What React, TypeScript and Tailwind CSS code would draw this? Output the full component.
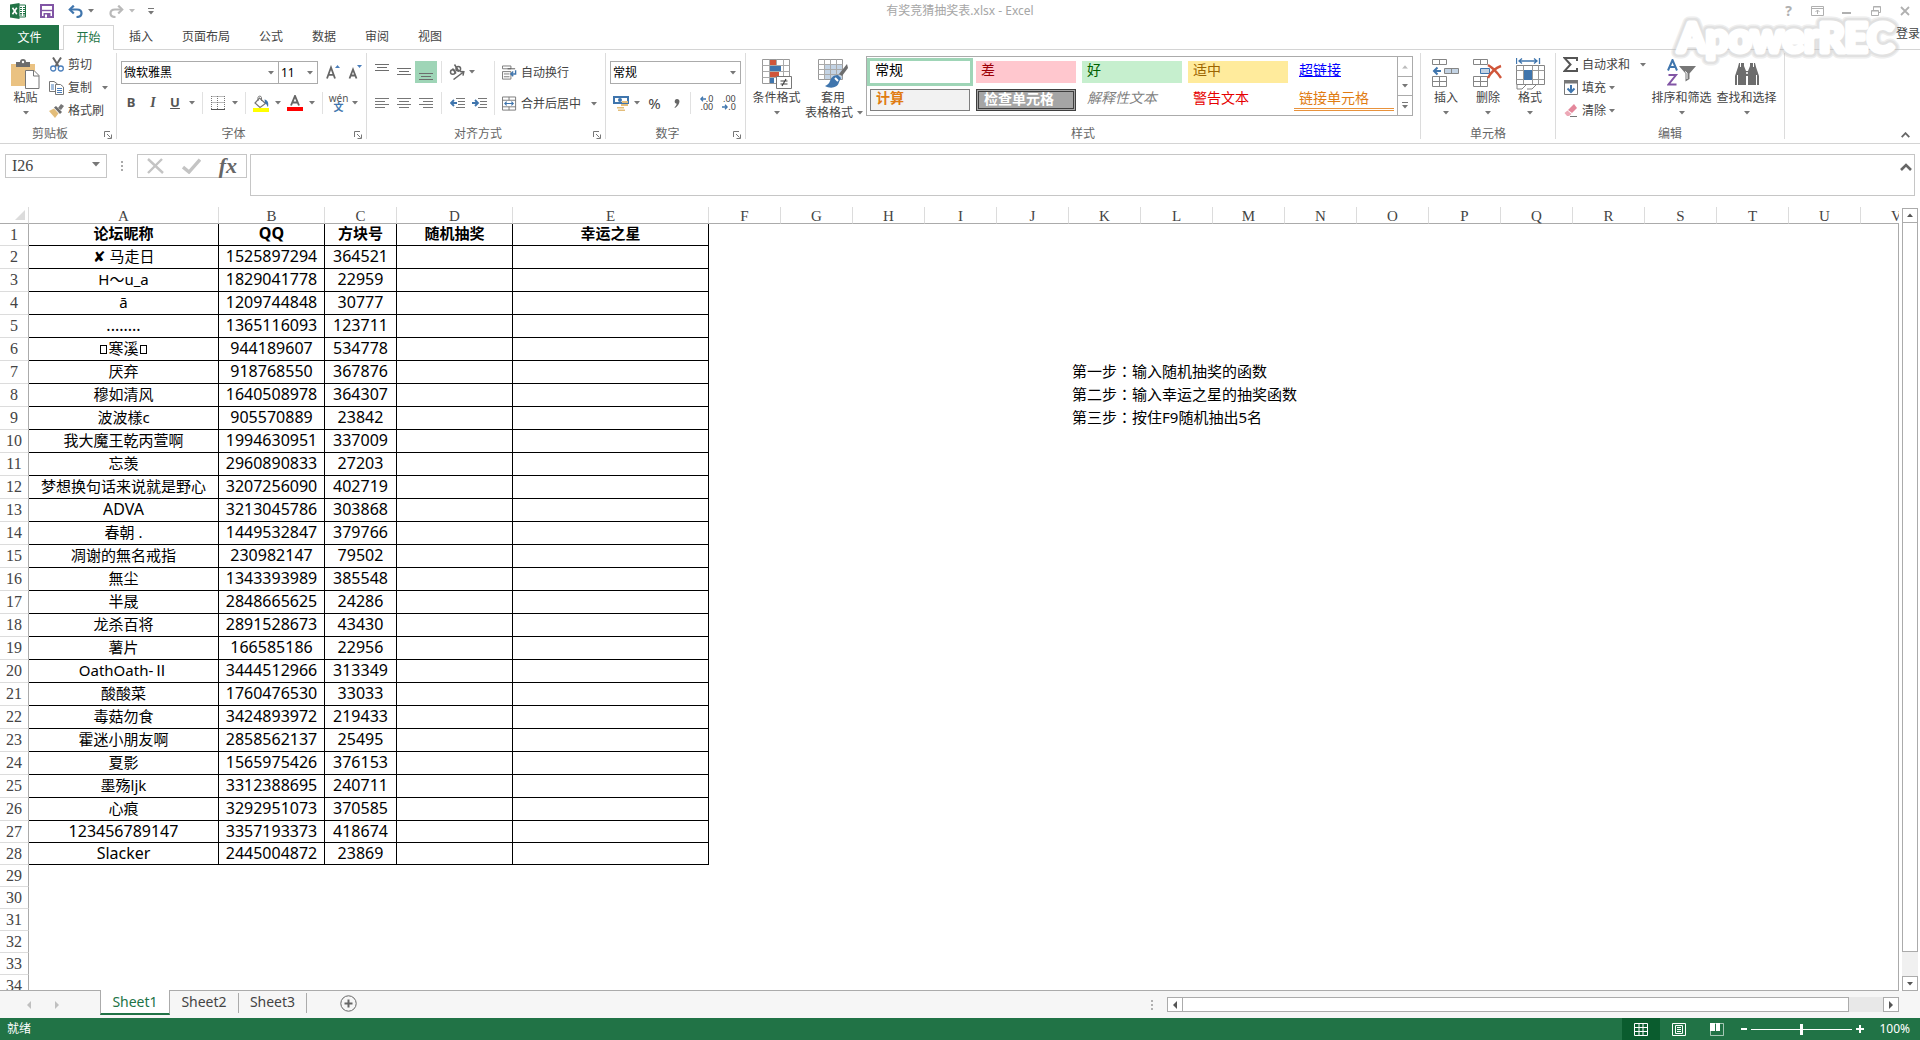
import React from "react";

type Kids = { children?: React.ReactNode };

/* ---------- small building blocks ---------- */

function Caret({ color = "#777777" }: { color?: string }) {
  return (
    <svg width="6" height="4" viewBox="0 0 6 4" className="shrink-0" aria-hidden="true">
      <path d="M0 0h6L3 3.5z" fill={color} />
    </svg>
  );
}

function Sep() {
  return <span className="mx-1 h-[22px] w-px shrink-0 bg-[#e1e1e1]" />;
}

function Cell({ w, label, active, children }: { w: string; label: string; active?: boolean } & Kids) {
  return (
    <button
      type="button"
      aria-label={label}
      className={`flex h-[22px] shrink-0 items-center justify-center ${w} ${active ? "bg-[#9fd5b7]" : ""}`}
    >
      {children}
    </button>
  );
}

function Launcher() {
  return (
    <button type="button" aria-label="更多选项" className="absolute right-1 bottom-0">
      <svg width="8" height="8" viewBox="0 0 8 8" fill="none" stroke="#777777">
        <path d="M.5 6V.5H6M3 3l3.5 3.5M7.5 3.5v4h-4" />
      </svg>
    </button>
  );
}

function Group({ w, label, launcher, children }: { w: string; label: string; launcher?: boolean } & Kids) {
  return (
    <section className={`relative flex h-[86px] shrink-0 flex-col border-r border-[#dcdcdc] ${w}`}>
      <div className="flex h-[74px]">{children}</div>
      <div className={`flex h-3 items-center justify-center pt-[2px] leading-3 text-[#666666] ${launcher ? "pr-4" : ""}`}>{label}</div>
      {launcher && <Launcher />}
    </section>
  );
}

function Big({ w, icon, lines, caretInline }: { w: string; icon: React.ReactNode; lines: string[]; caretInline?: boolean }) {
  return (
    <button type="button" className={`flex shrink-0 flex-col items-center pt-1 leading-[15px] whitespace-nowrap ${w}`}>
      <span className="flex h-[33px] items-center justify-center">{icon}</span>
      <span>{lines[0]}</span>
      {caretInline ? (
        <span className="flex w-full items-center justify-between pl-[2px]">
          {lines[1]}
          <Caret />
        </span>
      ) : (
        <span className="flex h-[15px] items-center">
          <Caret />
        </span>
      )}
    </button>
  );
}

function Small({ icon, label, caret, gap = "gap-[6px]" }: { icon: React.ReactNode; label: string; caret?: boolean; gap?: string }) {
  return (
    <button type="button" className={`flex h-[23px] items-center whitespace-nowrap ${gap}`}>
      <span className="flex items-center gap-1">
        <span className="flex w-[15px] justify-center">{icon}</span>
        {label}
      </span>
      {caret && <Caret />}
    </button>
  );
}

function Picker({ w, label, value }: { w: string; label: string; value: string }) {
  return (
    <label className={`relative flex h-[23px] shrink-0 items-center border border-[#ababab] bg-white ${w}`}>
      <select
        aria-label={label}
        defaultValue={value}
        className="h-full w-full appearance-none bg-transparent pl-[2px] text-xs text-black outline-none"
      >
        <option>{value}</option>
      </select>
      <span className="pointer-events-none absolute right-1">
        <Caret />
      </span>
    </label>
  );
}

/* ---------- icons ---------- */

const ExcelLogo = () => (
  <svg width="16" height="16" viewBox="0 0 16 16">
    <path d="M8 2h7.5v12H8z" fill="#fff" stroke="#217346" />
    <path d="M10 4.5h2M13 4.5h2M10 6.5h2M13 6.5h2M10 8.5h2M13 8.5h2M10 10.5h2M13 10.5h2M10 12h2M13 12h2" stroke="#217346" />
    <path d="M0 1.5 9.5 0v16L0 14.5z" fill="#217346" />
    <path d="m2.5 4.8 4.3 6.4M6.8 4.8l-4.3 6.4" stroke="#fff" strokeWidth="1.6" />
  </svg>
);
const SaveIcon = () => (
  <svg width="14" height="14" viewBox="0 0 14 14">
    <path d="M1 1h12v12H1z" fill="#fff" stroke="#8155a5" strokeWidth="2" />
    <path d="M2 6.5h10" stroke="#8155a5" strokeWidth="1.4" />
    <path d="M3.5 9h7v4.500h-7z" fill="#8155a5" />
    <path d="M5 10.500h2v3H5z" fill="#fff" />
  </svg>
);
const UndoIcon = ({ color, flip }: { color: string; flip?: boolean }) => (
  <svg width="15" height="13" viewBox="0 0 15 13" fill="none" stroke={color} strokeWidth="2.2">
    <g transform={flip ? "translate(15 0) scale(-1 1)" : undefined}>
      <path d="M2 4.500h7c3 0 4.500 1.600 4.500 3.700S12 12 8.500 12" />
      <path d="M5.800.6 1.800 4.500l4 4" />
    </g>
  </svg>
);
const PasteIcon = () => (
  <svg width="29" height="30" viewBox="0 0 29 30">
    <path d="M0 5h24v22H0z" fill="#eac282" />
    <path d="M5 3h4a3 3 0 0 1 6 0h4v5H5z" fill="#6d6d6d" />
    <circle cx="12" cy="3" r="1.200" fill="#fff" />
    <path d="M14.500 11.500h8.500l5 5v13H14.500z" fill="#fff" stroke="#777" />
    <path d="M22.500 11.500v5.500h5.500" fill="none" stroke="#777" />
  </svg>
);
const CutIcon = () => (
  <svg width="14" height="15" viewBox="0 0 14 15" fill="none">
    <path d="m3 .5 6 9.500M11 .5 5 10" stroke="#666" strokeWidth="2" />
    <circle cx="3.200" cy="11.500" r="2.500" stroke="#4a7ebb" strokeWidth="1.300" />
    <circle cx="10.800" cy="11.500" r="2.500" stroke="#4a7ebb" strokeWidth="1.300" />
  </svg>
);
const CopyIcon = () => (
  <svg width="15" height="14" viewBox="0 0 15 14" fill="#fff" stroke="#777">
    <path d="M.5.5H5L8.500 3v7.500h-8z" />
    <path d="M2 4h3M2 6h3M2 8h3" stroke="#4a7ebb" />
    <path d="M6.500 3.500h5l3 2.500v7.500h-8z" />
    <path d="M8 7.500h5M8 9.500h5M8 11.500h5" stroke="#4a7ebb" />
  </svg>
);
const BrushIcon = () => (
  <svg width="15" height="14" viewBox="0 0 15 14">
    <path d="m0 7 5-2.500 4.500 5L6 14z" fill="#e3bd7a" />
    <path d="m5 3.500 2-1.500 6 6-2 2z" fill="#6d6d6d" />
    <path d="m9 4 3-4 3 2-3 4z" fill="#777" />
  </svg>
);
const BigA = ({ small, up }: { small?: boolean; up?: boolean }) => (
  <svg width="14" height="14" viewBox="0 0 14 14">
    <path d={small ? "m1.500 13.500 3.500-9 3.500 9M2.800 10.500h4.400" : "m1 13.500 4-11 4 11M2.300 9.800h5.400"} fill="none" stroke="#666" strokeWidth="1.800" />
    <path d={up ? "M9 3h5L11.500 0z" : "M9 0h5l-2.500 3z"} fill="#4a7ebb" />
  </svg>
);
const Lines = ({ rows }: { rows: [number, number][] }) => (
  <svg width="14" height="12" viewBox="0 0 14 12" stroke="#777">
    {rows.map(([a, b], i) => (
      <path key={i} d={`M${a} ${i * 3 + 1.5}H${b}`} />
    ))}
  </svg>
);
const VAlign = ({ y }: { y: number }) => (
  <svg width="14" height="22" viewBox="0 0 14 22" stroke="#6d6d6d">
    <path d={`M0 ${y}.5h14M2 ${y + 3}.5h10M0 ${y + 6}.5h14`} />
  </svg>
);
const Indent = ({ out }: { out?: boolean }) => (
  <svg width="15" height="12" viewBox="0 0 15 12">
    <path d="M6 1.500h9M8 4.500h7M8 7.500h7M6 10.500h9" stroke="#777" />
    <path d={out ? "M7 6H1.500M4 3 1 6l3 3" : "M0 6h5.500M3 3l3 3-3 3"} fill="none" stroke="#3f75ad" strokeWidth="1.800" />
  </svg>
);
const Orientation = () => (
  <svg width="16" height="16" viewBox="0 0 16 16" fill="none" stroke="#666" strokeWidth="1.500">
    <circle cx="3.800" cy="8" r="2.300" />
    <path d="m3.500 4.500 3.500 5M5.500.5l4.500 7" />
    <circle cx="9.300" cy="4.800" r="2.300" />
    <path d="M4.500 15.500 14.500 8M10.800 7.600l4 .2-.8 3.900" />
  </svg>
);
const BordersIcon = () => (
  <svg width="14" height="14" viewBox="0 0 14 14" stroke="#777">
    <path d="M.5.5h13M.5 6.500h13M.5 0v13M6.500 0v13M13.500 0v13" strokeDasharray="1 1" />
    <path d="M0 13.500h14" stroke="#555" />
  </svg>
);
const FillIcon = () => (
  <svg width="16" height="17" viewBox="0 0 16 17">
    <path d="m6.500 3 6 5.500L7 12.500 2 8z" fill="#fff" stroke="#777" strokeWidth="1.200" />
    <path d="M5 6V2.500a1.800 1.800 0 0 1 3.500 0V6" fill="none" stroke="#777" />
    <path d="M11.500 4.500c3 .5 4.500 3 3.500 7.500-1-.5-1-3-3-4z" fill="#3f75ad" />
    <path d="M0 13h16v4H0z" fill="#ffff00" />
  </svg>
);
const FontColorIcon = () => (
  <svg width="16" height="16" viewBox="0 0 16 16">
    <path d="M4 10.500 8 1l4 9.500M5.300 7.500h5.400" fill="none" stroke="#666" strokeWidth="1.900" />
    <path d="M0 12h16v4H0z" fill="#f00" />
  </svg>
);
const WrapIcon = () => (
  <svg width="16" height="16" viewBox="0 0 16 16" fill="none" stroke="#777">
    <path d="M.5.5h9v3h-9zM.5 6.500h9v8h-9z" />
    <path d="M2 9h6M2 12h6" />
    <path d="M6 3.500h8" stroke="#555" />
    <path d="M14.500 5v4h-5M12 6.500 9.500 9l2.500 2.500" stroke="#3f75ad" strokeWidth="1.500" />
  </svg>
);
const MergeIcon = () => (
  <svg width="16" height="16" viewBox="0 0 16 16" fill="none" stroke="#777">
    <path d="M.5.5h14v14H.5zM.5 4h14M.5 11h14M7.500.5V4M7.500 11v3.500" />
    <path d="M3 7.500h9M5 5.500l-2 2 2 2M10 5.500l2 2-2 2" stroke="#3f75ad" strokeWidth="1.200" />
  </svg>
);
const MoneyIcon = () => (
  <svg width="16" height="16" viewBox="0 0 16 16">
    <path d="M0 1h16v8H0z" fill="#3f75ad" />
    <path d="M2 3h12v4H2z" fill="#fff" />
    <circle cx="7" cy="5" r="2" fill="#3f75ad" />
    <path d="M9 6h6v2H9zM8 9h7v2H8zM4 12h7v1.500H4zM5 14.500h7V16H5z" fill="#e3bd7a" />
  </svg>
);
const CondIcon = () => (
  <svg width="30" height="30" viewBox="0 0 30 30">
    <path d="M.5.5h27v24H.5z" fill="#fff" stroke="#999" />
    <path d="M.5 6.500h27M.5 12.500h27M.5 18.500h27M7.500.5v24M14.500.5v24M21.500.5v24" stroke="#aaa" />
    <path d="M8 1h6v5H8zM8 13h9v5H8z" fill="#d0563a" />
    <path d="M8 7h11v5H8zM8 19h4v5H8z" fill="#3f75ad" />
    <path d="M14.500 17.500h15v12h-15z" fill="#fff" stroke="#777" />
    <path d="M18.500 22h7M18.500 25h7M24 20l-4 7" stroke="#444" strokeWidth="1.200" />
  </svg>
);
const TableFmtIcon = () => (
  <svg width="30" height="29" viewBox="0 0 30 29">
    <path d="M.5.5h24v20H.5z" fill="#fff" stroke="#999" />
    <path d="M7 6h17v14H7z" fill="#c3d3e4" />
    <path d="M.5 5.500h24M.5 10.500h24M.5 15.500h24M6.500.5v20M12.500.5v20M18.500.5v20" stroke="#aaa" fill="none" />
    <path d="m29 5-8 10 3 2 6-8z" fill="#6d6d6d" />
    <path d="M20 16c-5 0-7 3-8 6-1 3-3 4-5 5 5 3 13 2 14-4l2-4z" fill="#3f75ad" />
    <path d="m17 19 3 3" stroke="#fff" strokeWidth="2" />
  </svg>
);
const InsertIcon = () => (
  <svg width="28" height="29" viewBox="0 0 28 29" fill="#fff" stroke="#858585">
    <path d="M.5.500h14v5H.5zM7.500.500v5M.5 17.500h14v10H.5zM7.500 17.500v10M.5 22.500h14" />
    <path d="M12.500 9.500h14v5h-14zM19.500 9.500v5" fill="#c3d3e4" />
    <path d="M9 12H2.500M5.500 8.500 2 12l3.500 3.500" fill="none" stroke="#3f75ad" strokeWidth="2" />
  </svg>
);
const DeleteIcon = () => (
  <svg width="30" height="29" viewBox="0 0 30 29" fill="#fff" stroke="#858585">
    <path d="M.5.500h14v5H.5zM7.500.500v5M.5 17.500h14v10H.5zM7.500 17.500v10M.5 22.500h14" />
    <path d="M7.500 9.500h9v5h-9z" fill="#c3d3e4" stroke="#3f75ad" />
    <path d="M15 6c5 3 9 7 13 13M28 7c-6 2-10 6-13 12" fill="none" stroke="#d0563a" strokeWidth="2.400" />
  </svg>
);
const FormatIcon = () => (
  <svg width="29" height="32" viewBox="0 0 29 32" fill="none" stroke="#999">
    <path d="M.5 0v6M23.500 0v6M3 3h18M6 .5 3 3l3 2.500M18 .5 21 3l-3 2.500" stroke="#3f75ad" strokeWidth="1.300" />
    <path d="M.5 7.500h28v19H.5z" fill="#fff" stroke="#858585" />
    <path d="M.5 12.500h28M.5 21.500h28M7.500 7.500v19M16.500 7.500v19M22.500 7.500v19" />
    <path d="M8 12h8v10H8z" fill="#3f75ad" stroke="none" />
    <path d="M1 27v4h5l4-4M11 31h5l4-4" stroke="#858585" />
  </svg>
);
const SigmaIcon = () => (
  <svg width="15" height="15" viewBox="0 0 15 15" fill="none" stroke="#555" strokeWidth="2">
    <path d="M14 4V1H1.500l6 6.500-6 6.500H14v-3" />
  </svg>
);
const FillDownIcon = () => (
  <svg width="14" height="15" viewBox="0 0 14 15">
    <path d="M.5.5h13v14H.5z" fill="#fff" stroke="#777" />
    <path d="M0 0h14v3.500H0z" fill="#777" />
    <path d="M7 5v7M3.500 8.500 7 12l3.500-3.500" fill="none" stroke="#3f75ad" strokeWidth="2" />
  </svg>
);
const EraserIcon = () => (
  <svg width="14" height="13" viewBox="0 0 14 13">
    <path d="m4 6 6-6 3 4-5 5z" fill="#e4879b" />
    <path d="m3.500 6.500 4 3.500-2.500 2H3L.5 9z" fill="#eda8b6" />
    <path d="M6 12.500h7" stroke="#777" />
  </svg>
);
const SortIcon = () => (
  <svg width="30" height="29" viewBox="0 0 30 29" fill="none">
    <path d="M1 11.500 5.500 1 10 11.500M2.500 8h6" stroke="#3f75ad" strokeWidth="2" />
    <path d="M1.500 16H9L1.500 25.500h8" stroke="#8155a5" strokeWidth="2" />
    <path d="M12 7h17l-6.500 7.500V20l-4 2.500v-8z" fill="#777" />
    <path d="m18 12.500 2 1.500v6" stroke="#fff" />
  </svg>
);
const FindIcon = () => (
  <svg width="26" height="24" viewBox="0 0 26 24" fill="#6d6d6d">
    <path d="M5 1h5v3l2 5v14H1V14L4 5zM21 1h-5v3l-2 5v14h11v-9l-3-9z" />
    <path d="M11 9h4v5h-4z" />
    <path d="M6.500 1v4M19.500 1v4M3.500 13v10M22.500 13v10" stroke="#fff" />
    <circle cx="13" cy="11" r="1" fill="#fff" />
  </svg>
);

/* ---------- window header ---------- */

function TitleBar() {
  return (
    <header className="grid h-[25px] shrink-0 grid-cols-[1fr_auto_1fr] items-center pb-[3px]">
      <div className="flex items-center pl-[10px]">
        <ExcelLogo />
        <button type="button" aria-label="保存" className="ml-[14px]"><SaveIcon /></button>
        <button type="button" aria-label="撤消" className="ml-[14px] flex items-center gap-[5px]">
          <UndoIcon color="#3f75ad" />
          <Caret />
        </button>
        <button type="button" aria-label="恢复" className="ml-[15px] flex items-center gap-[5px]">
          <UndoIcon color="#b9b9b9" flip />
          <Caret color="#bbbbbb" />
        </button>
        <button type="button" aria-label="自定义快速访问工具栏" className="ml-[13px] flex flex-col items-center gap-[2px]">
          <span className="h-px w-[6px] bg-[#777777]" />
          <Caret />
        </button>
      </div>
      <h1 className="text-[#a6a6a6]">有奖竞猜抽奖表.xlsx - Excel</h1>
      <div className="flex items-center justify-end pr-[1px] text-[#b0b0b0]">
        <button type="button" aria-label="帮助" className="flex w-[29px] justify-center text-sm leading-4 font-bold">?</button>
        <button type="button" aria-label="功能区显示选项" className="flex w-[29px] justify-center">
          <svg width="13" height="10" viewBox="0 0 13 10" fill="none" stroke="currentColor"><path d="M.5.5h12v9H.5zM.5 2.500h12M6.500 8V4M4.500 6l2-2 2 2" /></svg>
        </button>
        <button type="button" aria-label="最小化" className="flex w-[29px] justify-center">
          <svg width="9" height="10" viewBox="0 0 9 10" stroke="currentColor" strokeWidth="2"><path d="M0 7h9" /></svg>
        </button>
        <button type="button" aria-label="向下还原" className="flex w-[29px] justify-center">
          <svg width="10" height="10" viewBox="0 0 10 10" fill="none" stroke="currentColor"><path d="M.5 4.500h7v5h-7zM.5 5h7M2.500 4V.5h7v6H8M2.500 1h7" /></svg>
        </button>
        <button type="button" aria-label="关闭" className="flex w-[29px] justify-center">
          <svg width="10" height="10" viewBox="0 0 10 10" stroke="currentColor" strokeWidth="1.800"><path d="m1 1 8 8M9 1 1 9" /></svg>
        </button>
      </div>
    </header>
  );
}

const tabs = ["插入", "页面布局", "公式", "数据", "审阅", "视图"];

function Tabs() {
  return (
    <nav className="flex h-[25px] shrink-0 border-b border-[#d4d4d4] text-[#444444]">
      <button type="button" className="-mb-px h-[25px] w-[59px] shrink-0 bg-[#217346] text-white">文件</button>
      <button type="button" className="relative z-10 -mb-px ml-1 h-[25px] w-[51px] shrink-0 border border-b-0 border-[#d4d4d4] bg-white text-[#217346]">开始</button>
      {tabs.map((t) => (
        <button key={t} type="button" className="shrink-0 pr-[14px] pl-[15px] whitespace-nowrap">{t}</button>
      ))}
      <button type="button" className="relative z-30 ml-auto pb-[6px] whitespace-nowrap">登录</button>
    </nav>
  );
}

function Watermark() {
  return (
    <svg width="250" height="60" viewBox="0 0 250 60" className="pointer-events-none absolute top-[9px] right-[3px] z-20" aria-hidden="true">
      <g fontFamily="Lato, 'Noto Sans', sans-serif" fontWeight="700" fontSize="40" strokeLinejoin="round" strokeLinecap="round">
        <text x="11" y="43" fill="#bdbdbd" stroke="#bdbdbd" strokeWidth="13" opacity="0.25">ApowerREC</text>
        <text x="11" y="43" fill="#bdbdbd" stroke="#bdbdbd" strokeWidth="10" opacity="0.25">ApowerREC</text>
        <text x="11" y="43" fill="#ffffff" stroke="#ffffff" strokeWidth="5">ApowerREC</text>
      </g>
    </svg>
  );
}

/* ---------- ribbon ---------- */

const styleCells: { text: string; cls: string }[] = [
  { text: "常规", cls: "leading-[17px] bg-white text-black ring-[3px] ring-[#9fd5b7]" },
  { text: "差", cls: "leading-[17px] bg-[#ffc7ce] text-[#9c0006]" },
  { text: "好", cls: "leading-[17px] bg-[#c6efce] text-[#006100]" },
  { text: "适中", cls: "leading-[17px] bg-[#ffeb9c] text-[#9c6500]" },
  { text: "超链接", cls: "leading-[17px] text-[#0000ff] underline" },
  { text: "计算", cls: "leading-[16px] border border-[#7f7f7f] bg-[#f2f2f2] font-bold text-[#e07c12]" },
  { text: "检查单元格", cls: "leading-[13px] border-[3px] border-double border-[#3f3f3f] bg-[#a5a5a5] font-bold text-white" },
  { text: "解释性文本", cls: "leading-[18px] text-[#7f7f7f] italic" },
  { text: "警告文本", cls: "leading-[18px] text-[#e60000]" },
  { text: "链接单元格", cls: "leading-[18px] border-b-[3px] border-double border-[#e8923c] text-[#e07c12]" },
];

function Ribbon() {
  return (
    <div className="flex h-[94px] shrink-0 border-b border-[#d4d4d4] pt-[3px] text-[#444444]">
      <Group w="w-[117px]" label="剪贴板" launcher>
        <div className="flex gap-[6px] pl-[10px]">
          <Big w="w-[31px]" icon={<PasteIcon />} lines={["粘贴"]} />
          <div className="flex flex-col items-start pl-[2px]">
            <Small icon={<CutIcon />} label="剪切" />
            <Small icon={<CopyIcon />} label="复制" caret gap="gap-[10px]" />
            <Small icon={<BrushIcon />} label="格式刷" />
          </div>
        </div>
      </Group>

      <Group w="w-[250px]" label="字体" launcher>
        <div className="flex flex-col gap-2 pt-2">
          <div className="flex pl-1">
            <Picker w="w-[158px]" label="字体" value="微软雅黑" />
            <Picker w="w-[40px] -ml-px" label="字号" value="11" />
            <span className="w-1" />
            <Cell w="w-[22px]" label="增大字号"><BigA up /></Cell>
            <Cell w="w-[22px]" label="减小字号"><BigA small /></Cell>
          </div>
          <div className="flex items-center pl-[3px] text-[13px] font-bold text-[#555555]">
            <Cell w="w-[22px]" label="加粗">B</Cell>
            <Cell w="w-[22px]" label="倾斜"><i className="font-['Liberation_Serif',serif] text-sm">I</i></Cell>
            <Cell w="w-[22px]" label="下划线"><u>U</u></Cell>
            <Cell w="w-3" label="下划线选项"><Caret /></Cell>
            <Sep />
            <Cell w="w-[22px]" label="边框"><BordersIcon /></Cell>
            <Cell w="w-3" label="边框选项"><Caret /></Cell>
            <Sep />
            <Cell w="w-[22px]" label="填充颜色"><FillIcon /></Cell>
            <Cell w="w-3" label="填充颜色选项"><Caret /></Cell>
            <Cell w="w-[22px]" label="字体颜色"><FontColorIcon /></Cell>
            <Cell w="w-3" label="字体颜色选项"><Caret /></Cell>
            <Sep />
            <Cell w="w-[23px]" label="拼音">
              <span className="flex flex-col items-center font-normal">
                <span className="text-[10px] leading-[8px]">wén</span>
                <span className="text-[10px] leading-[11px] font-bold text-[#3f75ad]">文</span>
              </span>
            </Cell>
            <Cell w="w-[10px]" label="拼音选项"><Caret /></Cell>
          </div>
        </div>
      </Group>

      <Group w="w-[239px]" label="对齐方式" launcher>
        <div className="flex pt-2 pl-1">
          <div className="flex flex-col gap-[9px]">
            <div className="flex">
              <Cell w="w-[22px]" label="顶端对齐"><VAlign y={3} /></Cell>
              <Cell w="w-[22px]" label="垂直居中"><VAlign y={7} /></Cell>
              <Cell w="w-[22px]" label="底端对齐" active><VAlign y={12} /></Cell>
              <Sep />
              <Cell w="w-[22px]" label="方向"><Orientation /></Cell>
              <Cell w="w-2" label="方向选项"><Caret /></Cell>
            </div>
            <div className="flex">
              <Cell w="w-[22px]" label="左对齐"><Lines rows={[[0, 14], [0, 10], [0, 14], [0, 10]]} /></Cell>
              <Cell w="w-[22px]" label="居中"><Lines rows={[[0, 14], [2, 12], [0, 14], [2, 12]]} /></Cell>
              <Cell w="w-[22px]" label="右对齐"><Lines rows={[[0, 14], [4, 14], [0, 14], [4, 14]]} /></Cell>
              <Sep />
              <Cell w="w-[22px]" label="减少缩进量"><Indent out /></Cell>
              <Cell w="w-[22px]" label="增加缩进量"><Indent /></Cell>
            </div>
          </div>
          <span className="mr-[7px] ml-1 h-[54px] w-px bg-[#e1e1e1]" />
          <div className="flex flex-col items-start gap-2">
            <Small icon={<WrapIcon />} label="自动换行" />
            <Small icon={<MergeIcon />} label="合并后居中" caret gap="gap-[10px]" />
          </div>
        </div>
      </Group>

      <Group w="w-[140px]" label="数字" launcher>
        <div className="flex flex-col gap-2 pt-2 pl-1">
          <Picker w="w-[131px]" label="数字格式" value="常规" />
          <div className="flex items-center">
            <Cell w="w-[22px]" label="会计数字格式"><MoneyIcon /></Cell>
            <Cell w="w-[10px]" label="会计数字格式选项"><Caret /></Cell>
            <Cell w="w-[25px]" label="百分比样式"><span className="text-[15px]">%</span></Cell>
            <Cell w="w-[19px]" label="千位分隔样式">
              <svg width="6" height="9" viewBox="0 0 6 9"><path d="M3 0c4 0 3 6-2 9l-.5-.8C2 7 2.800 5.500 2.500 4.500 0 5 0 0 3 0z" fill="#666" /></svg>
            </Cell>
            <Sep />
            <Cell w="w-[23px]" label="增加小数位数">
              <span className="flex flex-col items-end text-[9px] leading-[8px]">
                <span className="flex items-center">
                  <svg width="6" height="6" viewBox="0 0 6 6" fill="none" stroke="#3f75ad" strokeWidth="1.300"><path d="M6 3H1M3 .8.8 3 3 5.200" /></svg>
                  .0
                </span>
                <span>.00</span>
              </span>
            </Cell>
            <Cell w="w-[22px]" label="减少小数位数">
              <span className="flex flex-col items-end text-[9px] leading-[8px]">
                <span>.00</span>
                <span className="flex items-center">
                  <svg width="6" height="6" viewBox="0 0 6 6" fill="none" stroke="#3f75ad" strokeWidth="1.300"><path d="M0 3h5M3 .8 5.200 3 3 5.200" /></svg>
                  .0
                </span>
              </span>
            </Cell>
          </div>
        </div>
      </Group>

      <Group w="w-[675px]" label="样式">
        <Big w="ml-1 w-[53px]" icon={<CondIcon />} lines={["条件格式"]} />
        <Big w="w-[60px]" icon={<TableFmtIcon />} lines={["套用", "表格格式"]} caretInline />
        <div className="mt-[3px] ml-[3px] flex h-[60px] border border-[#ababab]">
          <div className="grid grid-cols-[repeat(5,100px)] grid-rows-[22px_22px] gap-[6px] py-1 pr-[3px] pl-[3px]">
            {styleCells.map((s) => (
              <button key={s.text} type="button" className={`flex items-start pl-[5px] text-left text-[14px] whitespace-nowrap ${s.cls}`}>
                {s.text}
              </button>
            ))}
          </div>
          <div className="flex w-[15px] flex-col border-l border-[#ababab]">
            <button type="button" aria-label="上一行" className="flex flex-1 rotate-180 items-center justify-center"><Caret color="#bbbbbb" /></button>
            <button type="button" aria-label="下一行" className="flex flex-1 items-center justify-center border-y border-[#ababab]"><Caret /></button>
            <button type="button" aria-label="其他样式" className="flex flex-1 flex-col items-center justify-center gap-[2px]">
              <span className="h-px w-[6px] bg-[#777777]" />
              <Caret />
            </button>
          </div>
        </div>
      </Group>

      <Group w="w-[135px]" label="单元格">
        <div className="flex pl-1">
          <Big w="w-[42px]" icon={<InsertIcon />} lines={["插入"]} />
          <Big w="w-[42px]" icon={<DeleteIcon />} lines={["删除"]} />
          <Big w="w-[42px]" icon={<FormatIcon />} lines={["格式"]} />
        </div>
      </Group>

      <Group w="w-[229px]" label="编辑">
        <div className="flex w-[93px] flex-col items-start pl-[7px]">
          <Small icon={<SigmaIcon />} label="自动求和" caret gap="gap-[10px]" />
          <Small icon={<FillDownIcon />} label="填充" caret gap="gap-[3px]" />
          <Small icon={<EraserIcon />} label="清除" caret gap="gap-[3px]" />
        </div>
        <Big w="w-[65px]" icon={<SortIcon />} lines={["排序和筛选"]} />
        <Big w="w-[65px]" icon={<FindIcon />} lines={["查找和选择"]} />
      </Group>

      <button type="button" aria-label="折叠功能区" className="mr-[10px] mb-[5px] ml-auto self-end">
        <svg width="9" height="6" viewBox="0 0 9 6" fill="none" stroke="#666" strokeWidth="1.800"><path d="m.7 5.200 3.800-4 3.800 4" /></svg>
      </button>
    </div>
  );
}

/* ---------- formula bar ---------- */

function FormulaBar() {
  return (
    <div className="flex h-[63px] shrink-0 items-start pt-[10px] pr-[5px] pl-[5px]">
      <label className="relative flex h-6 w-[102px] shrink-0 items-center border border-[#c6c6c6]">
        <input aria-label="名称框" defaultValue="I26" className="w-full bg-transparent pl-[6px] font-['Liberation_Serif',serif] text-base leading-5 text-[#444444] outline-none" />
        <span className="absolute top-[7px] right-[6px]">
          <svg width="8" height="5" viewBox="0 0 8 5"><path d="M0 0h8L4 4.500z" fill="#777" /></svg>
        </span>
      </label>
      <span className="mx-[14px] flex h-6 flex-col items-center justify-center gap-[2px]">
        <i className="h-[2px] w-[2px] bg-[#aaaaaa]" />
        <i className="h-[2px] w-[2px] bg-[#aaaaaa]" />
        <i className="h-[2px] w-[2px] bg-[#aaaaaa]" />
      </span>
      <div className="flex h-6 w-[110px] shrink-0 items-center justify-around border border-[#c6c6c6]">
        <button type="button" aria-label="取消">
          <svg width="17" height="16" viewBox="0 0 17 16" stroke="#c4c4c4" strokeWidth="2.400"><path d="m1 1 15 14M15 1 1 15" /></svg>
        </button>
        <button type="button" aria-label="输入">
          <svg width="19" height="16" viewBox="0 0 19 16" fill="none" stroke="#c4c4c4" strokeWidth="3.400"><path d="m1 9 6 5L18 1.500" /></svg>
        </button>
        <button type="button" aria-label="插入函数" className="font-['Liberation_Serif',serif] text-[22px] leading-5 font-bold text-[#666666] italic">fx</button>
      </div>
      <div className="relative ml-[3px] h-[42px] flex-1 border border-[#c6c6c6]">
        <textarea aria-label="编辑栏" className="h-full w-full resize-none bg-transparent px-1 outline-none" />
        <button type="button" aria-label="折叠编辑栏" className="absolute top-[8px] right-[2px]">
          <svg width="12" height="8" viewBox="0 0 12 8" fill="none" stroke="#666" strokeWidth="2.600"><path d="m1 7 5-5 5 5" /></svg>
        </button>
      </div>
    </div>
  );
}

/* ---------- sheet ---------- */

const Box = () => <span className="mx-px inline-block h-[9px] w-[7px] border border-black" role="img" aria-label="□" />;

const data: [React.ReactNode, string, string][] = [
  ["✘ 马走日", "1525897294", "364521"],
  ["H～u_a", "1829041778", "22959"],
  ["ā", "1209744848", "30777"],
  ["........", "1365116093", "123711"],
  [<><Box />寒溪<Box /></>, "944189607", "534778"],
  ["厌弃", "918768550", "367876"],
  ["穆如清风", "1640508978", "364307"],
  ["波波樣c", "905570889", "23842"],
  ["我大魔王乾丙萱啊", "1994630951", "337009"],
  ["忘羡", "2960890833", "27203"],
  ["梦想换句话来说就是野心", "3207256090", "402719"],
  ["ADVA", "3213045786", "303868"],
  ["春朝 .", "1449532847", "379766"],
  ["凋谢的無名戒指", "230982147", "79502"],
  ["無尘", "1343393989", "385548"],
  ["半晟", "2848665625", "24286"],
  ["龙杀百将", "2891528673", "43430"],
  ["薯片", "166585186", "22956"],
  ["OathOath-Ⅱ", "3444512966", "313349"],
  ["酸酸菜", "1760476530", "33033"],
  ["毒菇勿食", "3424893972", "219433"],
  ["霍迷小朋友啊", "2858562137", "25495"],
  ["夏影", "1565975426", "376153"],
  ["墨殇ljk", "3312388695", "240711"],
  ["心痕", "3292951073", "370585"],
  ["123456789147", "3357193373", "418674"],
  ["Slacker", "2445004872", "23869"],
];

const steps: Record<number, [string, string]> = {
  7: ["第一步", "输入随机抽奖的函数"],
  8: ["第二步", "输入幸运之星的抽奖函数"],
  9: ["第三步", "按住F9随机抽出5名"],
};

const letters = "ABCDEFGHIJKLMNOPQRSTUV".split("");
const cellCls = "border-r border-b border-black p-0 text-center align-top whitespace-nowrap";
const latin = /^[\x00-\x7f]+$/;

function Row({ n }: { n: number }) {
  const rec = n >= 2 && n <= 28 ? data[n - 2] : null;
  const height = n >= 2 && n <= 26 ? "h-[23px]" : "h-[22px]";
  return (
    <tr className={height}>
      <th scope="row" className="border-r border-b border-r-[#ababab] border-b-[#dcdcdc] p-0 font-['Liberation_Serif',serif] text-base leading-5 font-normal text-[#444444]">
        {n}
      </th>
      {n === 1 &&
        ["论坛昵称", "QQ", "方块号", "随机抽奖", "幸运之星"].map((h) => (
          <th key={h} scope="col" className={`${cellCls} ${h === "QQ" ? "text-base leading-[18px]" : "leading-[18px]"}`}>{h}</th>
        ))}
      {rec && (
        <>
          <td className={`${cellCls} ${typeof rec[0] === "string" && latin.test(rec[0]) ? "text-base leading-5" : ""}`}>{rec[0]}</td>
          <td className={`${cellCls} text-base leading-5`}>{rec[1]}</td>
          <td className={`${cellCls} text-base leading-5`}>{rec[2]}</td>
          <td className={cellCls} />
          <td className={cellCls} />
        </>
      )}
      {n > 28 && <td colSpan={5} />}
      {steps[n] ? (
        <>
          <td colSpan={5} />
          <td colSpan={12} className="p-0 pl-[3px] align-top whitespace-nowrap">
            {steps[n][0]}
            <span className="font-['Noto_Sans_CJK_TC',sans-serif]" lang="zh-Hant">：</span>
            {steps[n][1]}
          </td>
        </>
      ) : (
        <td colSpan={17} />
      )}
    </tr>
  );
}

function Sheet() {
  return (
    <div className="flex min-h-0 flex-1">
      <div className="relative min-w-0 flex-1 overflow-hidden border-b border-[#ababab]">
        <table className="w-[1933px] table-fixed border-separate border-spacing-0 text-[15px] leading-5 text-black">
          <colgroup>
            <col className="w-[29px]" />
            <col className="w-[190px]" />
            <col className="w-[106px]" />
            <col className="w-[72px]" />
            <col className="w-[116px]" />
            <col className="w-[196px]" />
            {letters.slice(5).map((l) => (
              <col key={l} className="w-[72px]" />
            ))}
          </colgroup>
          <thead>
            <tr className="h-[17px]">
              <th className="border-r border-b border-r-[#dcdcdc] border-b-[#ababab] p-0">
                <svg width="10" height="10" viewBox="0 0 10 10" className="ml-auto mr-[3px]"><path d="M10 0v10H0z" fill="#dcdcdc" /></svg>
              </th>
              {letters.map((l) => (
                <th key={l} scope="col" className="border-r border-b border-r-[#dcdcdc] border-b-[#ababab] p-0 pt-[2px] font-['Liberation_Serif',serif] text-[15px] leading-[14px] font-normal text-[#444444]">
                  {l}
                </th>
              ))}
            </tr>
          </thead>
          <tbody>
            {Array.from({ length: 34 }, (_, i) => (
              <Row key={i} n={i + 1} />
            ))}
          </tbody>
        </table>
        <span className="absolute top-4 right-0 bottom-0 w-px bg-[#ababab]" />
      </div>
      <div className="flex w-[21px] shrink-0 flex-col pt-px pr-[2px] pl-[3px]">
        <button type="button" aria-label="向上滚动" className="flex h-[15px] rotate-180 items-center justify-center border border-[#ababab]"><Caret color="#555555" /></button>
        <div className="flex flex-1 flex-col bg-[#f0f0f0] pb-6">
          <div className="-mt-px flex-1 border border-[#ababab] bg-white" />
        </div>
        <button type="button" aria-label="向下滚动" className="flex h-[15px] items-center justify-center border border-[#ababab] bg-white"><Caret color="#555555" /></button>
      </div>
    </div>
  );
}

function SheetTabs() {
  return (
    <div className="flex h-[27px] shrink-0 bg-[#f6f6f6] pr-[21px] text-sm text-[#444444]">
      <div className="flex w-[100px] shrink-0 items-center gap-6 pl-[27px]">
        <button type="button" aria-label="上一工作表"><svg width="4" height="8" viewBox="0 0 4 8"><path d="M4 0v8L0 4z" fill="#c0c0c0" /></svg></button>
        <button type="button" aria-label="下一工作表"><svg width="4" height="8" viewBox="0 0 4 8"><path d="M0 0v8l4-4z" fill="#c0c0c0" /></svg></button>
      </div>
      <button type="button" className="relative -mt-px h-[25px] w-[70px] shrink-0 border-x border-b-2 border-x-[#ababab] border-b-[#217346] bg-white leading-5 text-[#217346]">Sheet1</button>
      <div className="flex h-6 items-center">
        <button type="button" className="h-5 w-[69px] border-r border-[#ababab] pb-[2px] leading-4">Sheet2</button>
        <button type="button" className="h-5 w-[68px] border-r border-[#ababab] pb-[2px] leading-4">Sheet3</button>
        <button type="button" aria-label="新工作表" className="ml-[33px]">
          <svg width="17" height="17" viewBox="0 0 17 17" fill="none" stroke="#666"><circle cx="8.500" cy="8.500" r="7.700" /><path d="M4.500 8.500h8M8.500 4.500v8" strokeWidth="2" /></svg>
        </button>
      </div>
      <div className="mt-[6px] ml-auto flex h-[15px] w-2/5 max-w-[748px] items-center">
        <span className="mr-[14px] flex w-[2px] shrink-0 flex-col gap-[2px]">
          <i className="h-[2px] w-[2px] bg-[#b0b0b0]" />
          <i className="h-[2px] w-[2px] bg-[#b0b0b0]" />
          <i className="h-[2px] w-[2px] bg-[#b0b0b0]" />
        </span>
        <button type="button" aria-label="向左滚动" className="flex h-full w-4 shrink-0 items-center justify-center border border-[#ababab] bg-white"><svg width="4" height="8" viewBox="0 0 4 8"><path d="M4 0v8L0 4z" fill="#555" /></svg></button>
        <div className="flex h-full flex-1 bg-[#e8e8e8] pr-[34px]">
          <div className="-ml-px flex-1 border border-[#ababab] bg-white" />
        </div>
        <button type="button" aria-label="向右滚动" className="flex h-full w-4 shrink-0 items-center justify-center border border-[#ababab] bg-white"><svg width="4" height="8" viewBox="0 0 4 8"><path d="M0 0v8l4-4z" fill="#555" /></svg></button>
      </div>
    </div>
  );
}

function StatusBar() {
  return (
    <footer className="flex h-[22px] shrink-0 items-center bg-[#217346] pr-[10px] pl-[7px] text-white">
      <span className="mr-auto">就绪</span>
      <button type="button" aria-label="普通" className="flex h-[22px] w-[38px] items-center justify-center bg-[#0a5c2e]">
        <svg width="14" height="13" viewBox="0 0 14 13" fill="none" stroke="#fff"><path d="M.5.5h13v12H.5zM.5 4.500h13M.5 8.500h13M5 .5v12M9 .5v12" /></svg>
      </button>
      <button type="button" aria-label="页面布局" className="flex h-[22px] w-[38px] items-center justify-center">
        <svg width="14" height="13" viewBox="0 0 14 13" fill="none" stroke="#fff"><path d="M.5.5h13v12H.5zM3.500 2.500h7v8h-7zM5 4.500h4M5 6.500h4M5 8.500h4" /></svg>
      </button>
      <button type="button" aria-label="分页预览" className="flex h-[22px] w-[38px] items-center justify-center">
        <svg width="14" height="13" viewBox="0 0 14 13"><path d="M.5.5h13v12H.5z" fill="none" stroke="#fff" opacity=".6" /><path d="M0 0h5v8H0zM6 0h4v8H6z" fill="#fff" /></svg>
      </button>
      <button type="button" aria-label="缩小" className="ml-[5px] flex w-[6px]"><svg width="6" height="8" viewBox="0 0 6 8"><path d="M0 3h6v2H0z" fill="#fff" /></svg></button>
      <input
        type="range"
        aria-label="显示比例"
        min={0}
        max={200}
        defaultValue={100}
        className="mx-1 h-px w-[101px] appearance-none bg-white [&::-webkit-slider-thumb]:h-[11px] [&::-webkit-slider-thumb]:w-[3px] [&::-webkit-slider-thumb]:appearance-none [&::-webkit-slider-thumb]:bg-white"
      />
      <button type="button" aria-label="放大" className="flex w-2"><svg width="8" height="8" viewBox="0 0 8 8"><path d="M0 3h8v2H0zM3 0h2v8H3z" fill="#fff" /></svg></button>
      <span className="ml-[14px] w-8 text-right">100%</span>
    </footer>
  );
}

export default function App() {
  return (
    <div className="relative flex h-screen flex-col overflow-hidden bg-white font-['Noto_Sans','Noto_Sans_CJK_SC',sans-serif] text-xs text-[#444444]">
      <TitleBar />
      <Tabs />
      <Ribbon />
      <FormulaBar />
      <Sheet />
      <SheetTabs />
      <StatusBar />
      <Watermark />
    </div>
  );
}
